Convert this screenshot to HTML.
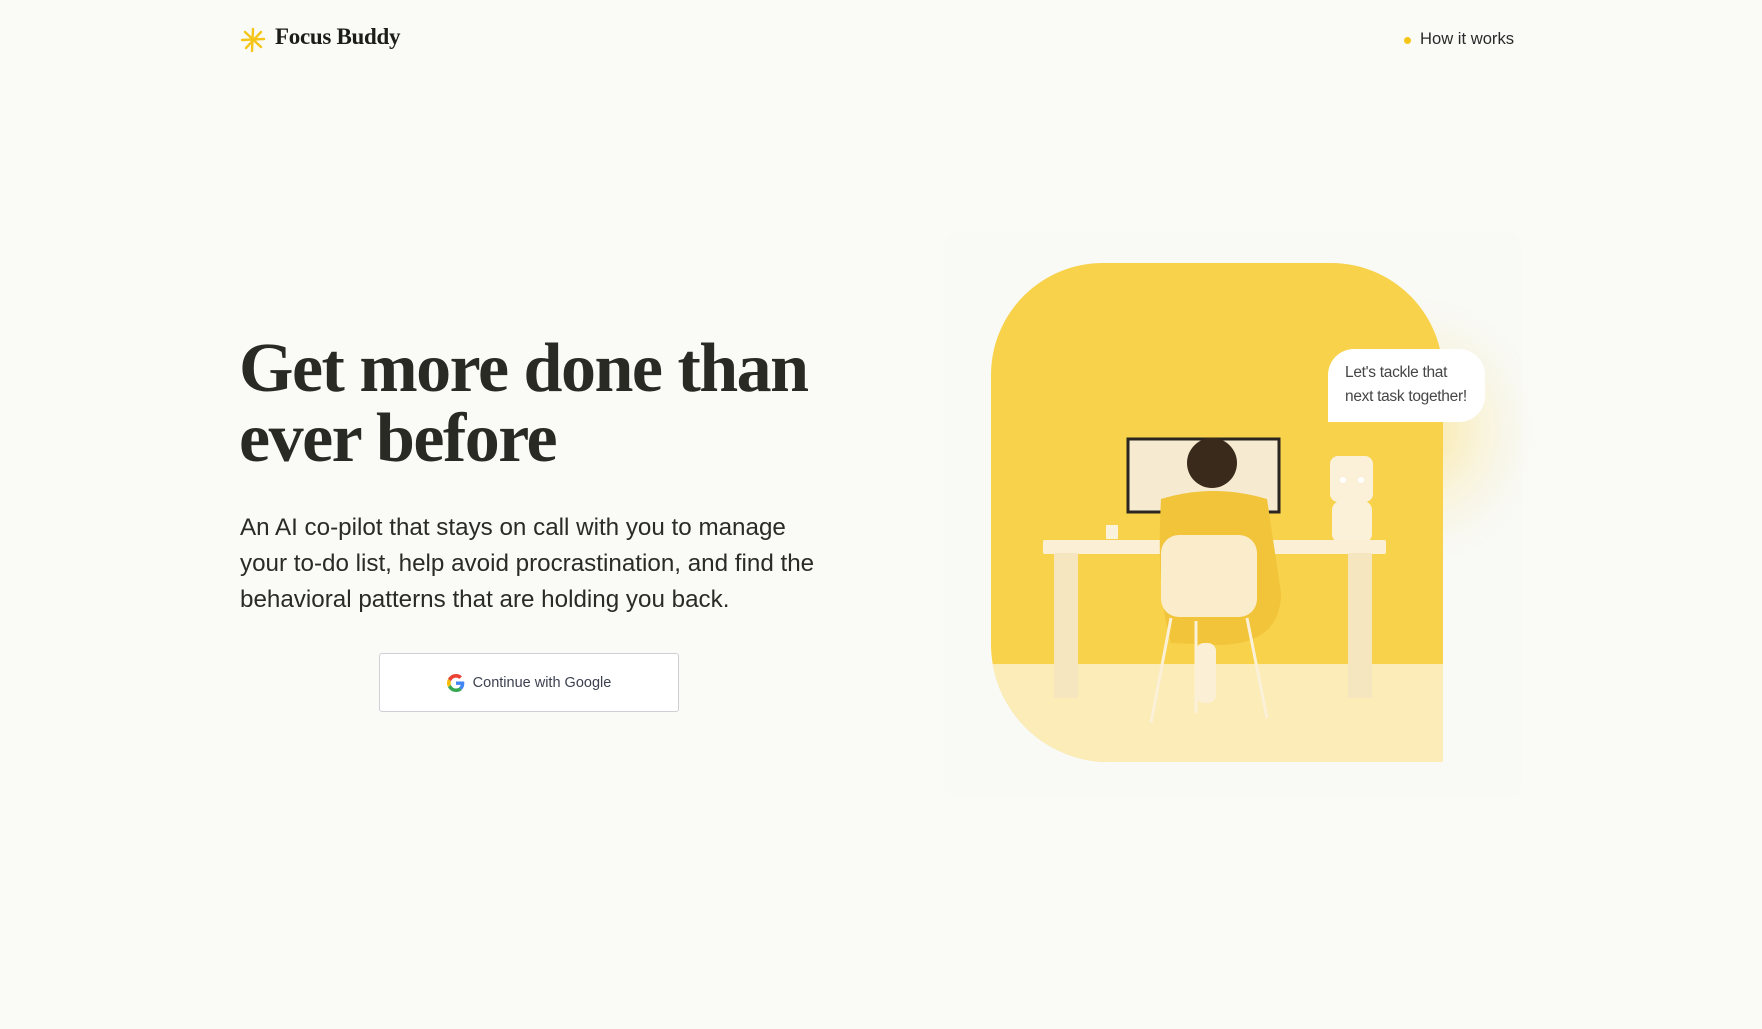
<!DOCTYPE html>
<html><head><meta charset="utf-8"><style>
*{margin:0;padding:0;box-sizing:border-box}
html,body{width:1762px;height:1029px;overflow:hidden;background:#fafaf7;font-family:"Liberation Sans",sans-serif;color:#26261f}
.abs{position:absolute}
.logo{left:275px;top:24px;font-family:"Liberation Serif",serif;font-size:23px;font-weight:bold;letter-spacing:-0.3px;color:#1c1c18}
.nav{left:1420px;top:29px;font-size:16.6px;color:#2a2a2a}
.dot{left:1404px;top:37px;width:7px;height:7px;border-radius:50%;background:#f5c518}
h1{position:absolute;left:239px;top:334px;font-family:"Liberation Serif",serif;font-weight:bold;font-size:70px;line-height:70px;letter-spacing:-1.5px;color:#2a2a24;white-space:nowrap}
p.lead{position:absolute;left:240px;top:510px;font-size:24.2px;line-height:36px;color:#2a2a26;white-space:nowrap}
.btn{left:379px;top:653px;width:300px;height:59px;border:1px solid #cfd0d6;border-radius:3px;background:#fff;display:flex;align-items:center;justify-content:center;font-size:14.5px;color:#3c4150}
.btn svg{margin-right:8px}
.panel{left:944px;top:232px;width:578px;height:566px;background:#f8f8f4;border-radius:16px;opacity:.6}
.glow{left:1310px;top:310px;width:220px;height:240px;border-radius:50%;background:radial-gradient(closest-side,rgba(250,215,90,.5),rgba(250,225,120,.18) 60%,rgba(250,240,200,0));filter:blur(10px)}
.shape{left:991px;top:263px;width:452px;height:499px;border-radius:112px 112px 0 118px;overflow:hidden;background:#f7d24a}
.bubble{left:1328px;top:349px;width:157px;height:73px;background:#fff;border-radius:26px 26px 26px 0;font-size:15.5px;line-height:23.5px;color:#454545;padding:12px 0 0 17px;letter-spacing:-0.3px}
</style></head><body>
<svg class="abs" style="left:240px;top:27px" width="26" height="26" viewBox="0 0 26 26"><g stroke="#f5c518" stroke-width="2.4" stroke-linecap="round"><line x1="13" y1="2" x2="12" y2="24"/><line x1="2" y1="13" x2="24" y2="12"/><line x1="5" y1="5" x2="21" y2="20"/><line x1="21" y1="5" x2="6" y2="21"/></g></svg>
<div class="abs logo">Focus Buddy</div>
<div class="abs dot"></div>
<div class="abs nav">How it works</div>
<h1>Get more done than<br>ever before</h1>
<p class="lead">An AI co-pilot that stays on call with you to manage<br>your to-do list, help avoid procrastination, and find the<br>behavioral patterns that are holding you back.</p>
<div class="abs btn"><svg width="18" height="18" viewBox="0 0 48 48"><path fill="#EA4335" d="M24 9.5c3.5 0 6.6 1.2 9.1 3.6l6.8-6.8C35.8 2.4 30.3 0 24 0 14.6 0 6.6 5.4 2.7 13.3l7.9 6.1C12.5 13.6 17.8 9.5 24 9.5z"/><path fill="#4285F4" d="M46.1 24.5c0-1.6-.1-3.1-.4-4.5H24v9h12.4c-.5 2.9-2.2 5.3-4.6 7l7.5 5.8c4.4-4 6.8-10 6.8-17.300z"/><path fill="#FBBC05" d="M10.5 28.6c-.5-1.4-.8-3-.8-4.6s.3-3.2.8-4.600l-7.9-6.1C1 16.6 0 20.2 0 24s1 7.4 2.7 10.7l7.8-6.1z"/><path fill="#34A853" d="M24 48c6.5 0 11.9-2.1 15.9-5.8l-7.5-5.8c-2.1 1.4-4.8 2.3-8.4 2.3-6.2 0-11.5-4.2-13.4-9.8l-7.9 6.1C6.6 42.6 14.6 48 24 48z"/></svg>Continue with Google</div>
<div class="abs panel"></div>
<div class="abs glow"></div>
<div class="abs shape">
<svg width="452" height="499" viewBox="0 0 452 499">
<rect x="0" y="401" width="452" height="98" fill="#fbecb8"/>
<rect x="137" y="176" width="151" height="73" fill="#f6ead0" stroke="#2b2620" stroke-width="3"/>
<rect x="115" y="262" width="12" height="14" fill="#fbf2dc"/>
<rect x="339" y="193" width="43" height="46" rx="8" fill="#fbf0d8"/>
<rect x="341" y="238" width="40" height="42" rx="9" fill="#fbf0d8"/>
<circle cx="352" cy="217" r="3" fill="#fff"/><circle cx="370" cy="217" r="3" fill="#fff"/>
<rect x="52" y="277" width="343" height="14" rx="2" fill="#fbf0d6"/>
<rect x="63" y="290" width="24" height="145" fill="#f6e6bf"/>
<rect x="357" y="290" width="24" height="145" fill="#f6e6bf"/>
<path d="M170 236 Q222 220 276 236 L290 330 Q290 380 230 382 L180 380 Q165 330 170 236Z" fill="#f2c43a"/>
<circle cx="221" cy="200" r="25" fill="#3a2a1c"/>
<rect x="170" y="272" width="96" height="82" rx="18" fill="#fbeccb"/>
<g stroke="#fbf0d8" stroke-width="3"><line x1="180" y1="355" x2="160" y2="460"/><line x1="256" y1="355" x2="276" y2="455"/><line x1="205" y1="358" x2="205" y2="450"/></g>
<rect x="205" y="380" width="20" height="60" rx="8" fill="#fbf0d6"/>
</svg>
</div>
<div class="abs bubble">Let's tackle that<br>next task together!</div>
</body></html>
